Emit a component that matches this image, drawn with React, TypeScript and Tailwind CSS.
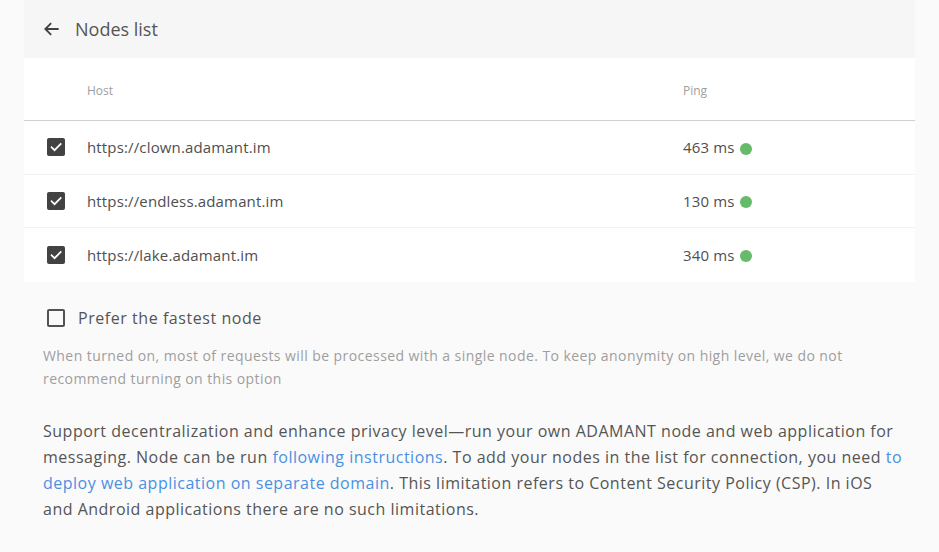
import React from "react";

const nodes = [
  { host: "https://clown.adamant.im", ping: "463 ms" },
  { host: "https://endless.adamant.im", ping: "130 ms" },
  { host: "https://lake.adamant.im", ping: "340 ms" },
];

function CheckedBox() {
  return (
    <div className="w-[18px] h-[18px] rounded-[2px] bg-[#424242] flex items-center justify-center">
      <svg width="14" height="14" viewBox="0 0 24 24" fill="none">
        <path d="M4.5 12.5l5 5L20 7" stroke="#fff" strokeWidth="3" strokeLinecap="square" />
      </svg>
    </div>
  );
}

export default function App() {
  return (
    <div
      className="w-[939px] h-[552px] bg-[#fafafa] text-[#4a4a4a] overflow-hidden"
      style={{ fontFamily: "'Open Sans', sans-serif" }}
    >
      <div className="mx-6">
        <div className="h-[58px] bg-[#f6f6f6] flex items-center pl-[18px] gap-[13px]">
          <svg width="20" height="20" viewBox="0 0 24 24" fill="none">
            <path d="M20 12H4M11 5l-7 7 7 7" stroke="#424242" strokeWidth="2.2" />
          </svg>
          <span className="text-[18px] text-[#555]">Nodes list</span>
        </div>
        <div className="bg-white">
          <div className="h-[63px] pt-[4px] flex items-center border-b border-[#cfcfcf] text-[12px] text-[#9e9e9e]">
            <div className="w-[63px]" />
            <div className="w-[596px]">Host</div>
            <div>Ping</div>
          </div>
          {nodes.map((n, i) => (
            <div
              key={n.host}
              className={`h-[53.5px] flex items-center text-[15px] tracking-[0.15px] text-[#4f4f4f] ${i < 2 ? "border-b border-[#f3f3f3]" : ""}`}
            >
              <div className="w-[63px] pl-[23px]">
                <CheckedBox />
              </div>
              <div className="w-[596px]">{n.host}</div>
              <div className="flex items-center gap-[5px]">
                <span>{n.ping}</span>
                <span className="w-[12px] h-[12px] rounded-full bg-[#66bb6a] mt-[3px]" />
              </div>
            </div>
          ))}
        </div>
        <div className="pl-[19px] pr-[12px]">
          <div className="flex items-center gap-[13px] pl-[4px] mt-[24px]">
            <div className="w-[18px] h-[18px] rounded-[2px] border-2 border-[#525252]" />
            <span className="text-[16px] tracking-[0.55px] text-[#555]">Prefer the fastest node</span>
          </div>
          <p className="mt-[14px] text-[14px] tracking-[0.43px] leading-[23px] text-[#9e9e9e]">
            When turned on, most of requests will be processed with a single node. To keep anonymity on high level, we do not recommend turning on this option
          </p>
          <p className="mt-[28px] text-[16px] tracking-[0.5px] leading-[26.3px] text-[#555]">
            Support decentralization and enhance privacy level—run your own ADAMANT node and web application for messaging. Node can be run{" "}
            <a className="text-[#4a90e2]">following instructions</a>. To add your nodes in the list for connection, you need{" "}
            <a className="text-[#4a90e2]">to deploy web application on separate domain</a>. This limitation refers to Content Security Policy (CSP). In iOS and Android applications there are no such limitations.
          </p>
        </div>
      </div>
    </div>
  );
}
